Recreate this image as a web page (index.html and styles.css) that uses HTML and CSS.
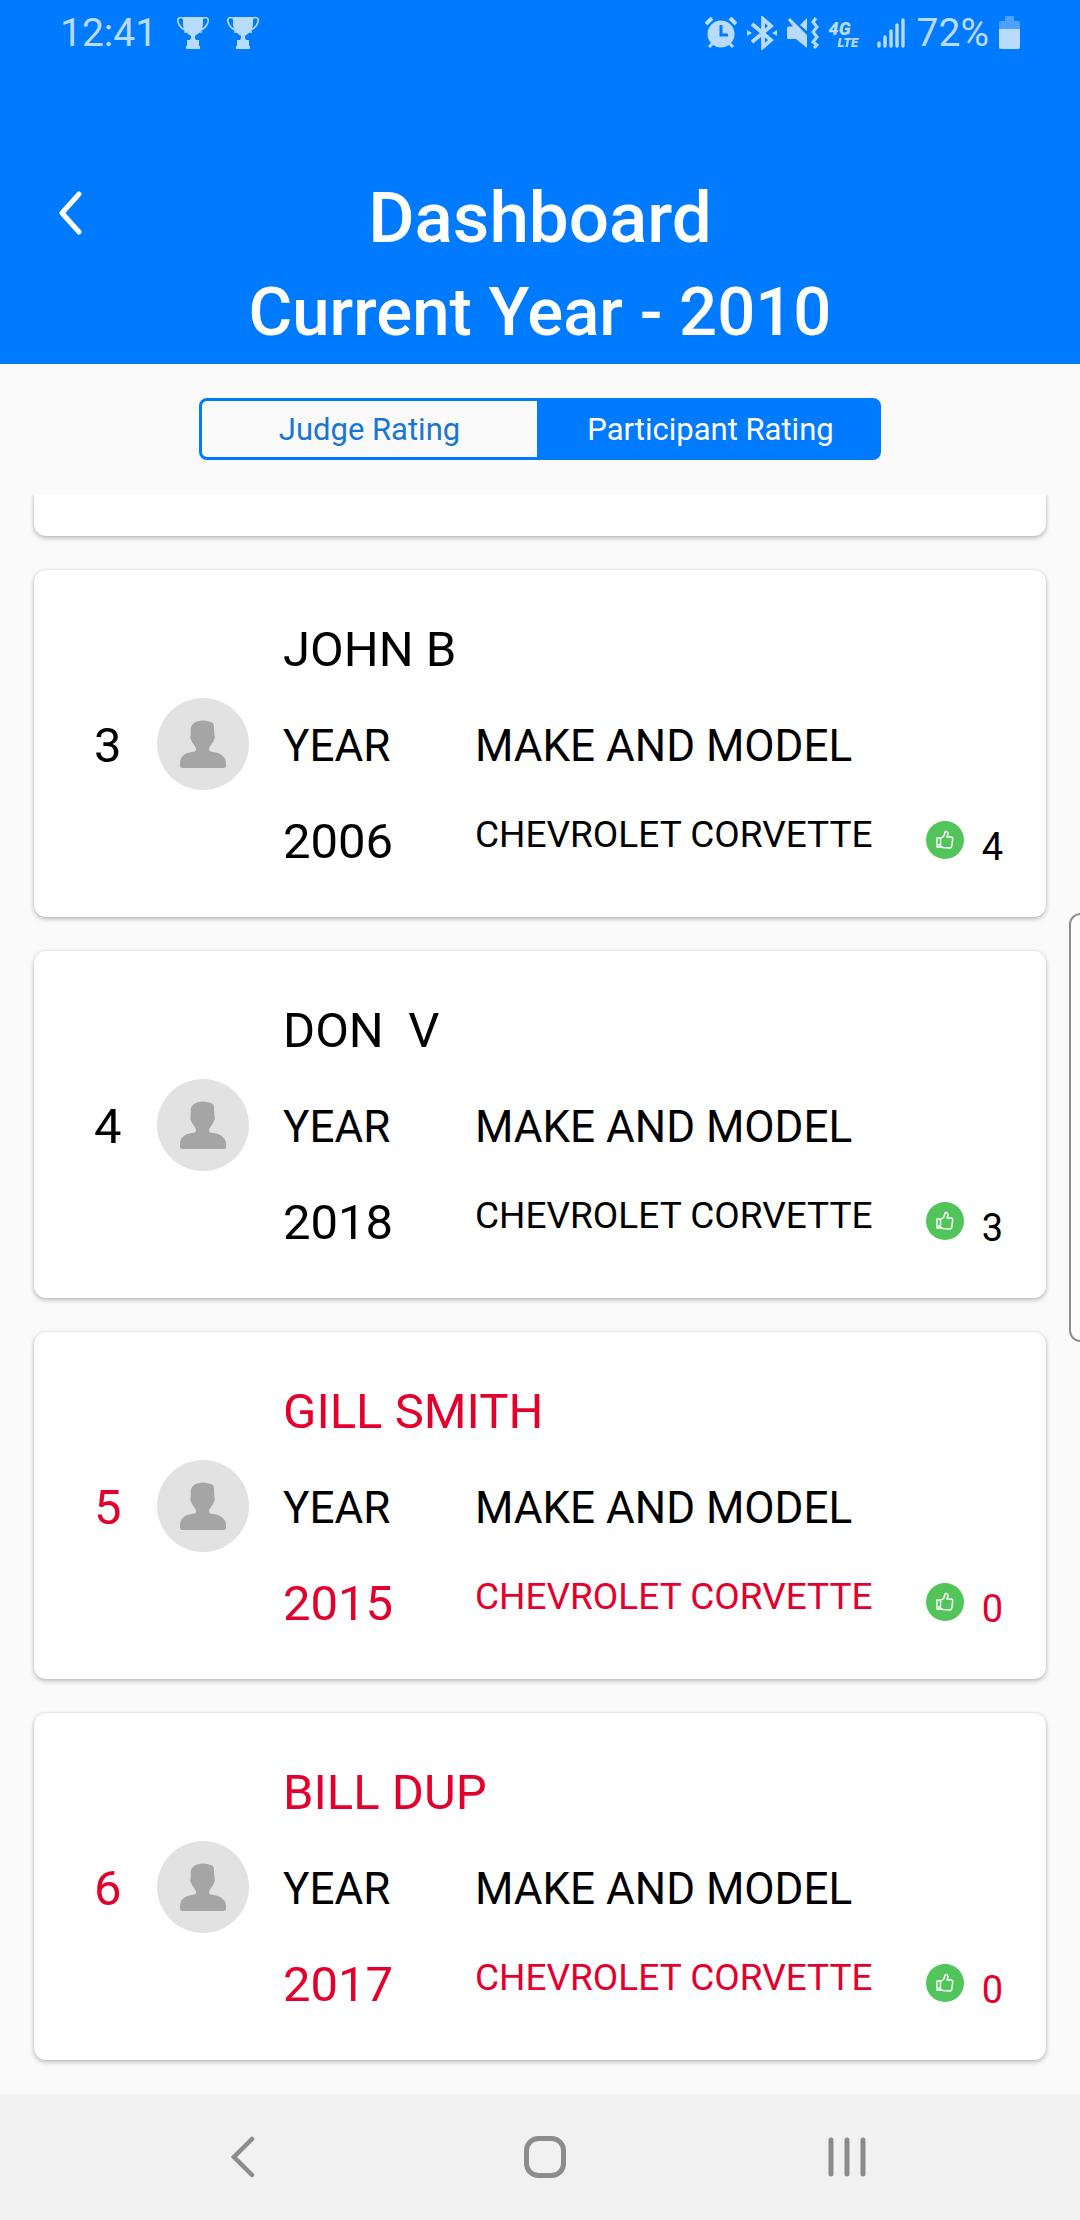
FILE: index.html
```html
<!DOCTYPE html>
<html lang="en">
<head>
<meta charset="utf-8">
<meta name="viewport" content="width=device-width, initial-scale=1">
<title>Dashboard</title>
<link rel="stylesheet" href="styles.css">
</head>
<body>
<svg class="defs" aria-hidden="true">
  <symbol id="trophy" viewBox="0 0 32 34">
    <path d="M6 1h20v6c0 6-3 10-8 13v2l1 2h3v6h1v3H9v-3h1v-6h3l1-2v-2C9 17 6 13 6 7z" fill="currentColor"/>
    <path d="M7 3C3 0 0 2 1 6c1 4 4 7 9 9M25 3c4-3 7-1 6 3-1 4-4 7-9 9M7 16h3M22 16h3" fill="none" stroke="currentColor" stroke-width="1.6"/>
  </symbol>
  <symbol id="person" viewBox="0 0 46 48">
    <path d="M23 .5c4 0 6 1 9 2 2 1 2 3 2 6l.5 7c.8 1 .4 3-.4 4-1 4-5 7-5 9.500 0 2.500 1 2.500 4 3C41 33 46 37 46 43v2.500Q46 48 43.500 48h-41Q0 48 0 45.500V43c0-6 4-10 12-11 3-.5 4-.5 4-3 0-2.500-4-5.500-5-9.500-.9-1-1-3-.3-4V9C11 4 16 .5 23 .5z" fill="currentColor"/>
  </symbol>
  <symbol id="thumb" viewBox="0 0 20 20">
    <path d="M5.500 8.500 8.500 6.500c1.200-1.500.9-4.500 2-5 1.500-.4 2.800 1 2.300 3l-.8 2.500h4q1.900.3 1.700 2L16.800 16q-.4 2-2 2L8 17.500l-2.500-1" fill="none" stroke="currentColor" stroke-width="1.500" stroke-linejoin="round"/>
    <path d="M2 8h3.500v9H2z" fill="none" stroke="currentColor" stroke-width="1.400"/>
    <circle cx="4" cy="15" r=".9" fill="currentColor"/>
  </symbol>
</svg>
<div class="screen">
  <header class="header">
    <div class="status">
      <div class="status-left">
        <span>12:41</span>
        <svg class="trophy"><use href="#trophy"/></svg>
        <svg class="trophy"><use href="#trophy"/></svg>
      </div>
      <div class="status-right">
        <svg width="32" height="32" viewBox="0 0 32 32" role="img" aria-label="Alarm">
          <path d="M1 7 7 1M31 7 25 1" stroke="currentColor" stroke-width="4"/>
          <path d="m4 30 5-5M28 30l-5-5" stroke="currentColor" stroke-width="3"/>
          <circle cx="16" cy="17" r="13.500" fill="currentColor"/>
          <path d="M16 8v10h7" fill="none" stroke="#007aff" stroke-width="3"/>
        </svg>
        <svg width="30" height="34" viewBox="0 0 30 34" role="img" aria-label="Bluetooth">
          <path d="m5 8 19 16-8 7V3l8 7L5 26" fill="none" stroke="currentColor" stroke-width="3.800"/>
          <path d="m0 14 5 3-5 3zM30 14l-5 3 5 3z" fill="currentColor"/>
        </svg>
        <svg width="32" height="32" viewBox="0 0 32 32" role="img" aria-label="Vibrate">
          <path d="M0 11q0-1.500 1.500-1.500H6L1 3l2-2 17 17v13L9 22H1.500Q0 22 0 20.500zM13 8l7-7v13z" fill="currentColor"/>
          <path d="m29 1-3 4 4 5-4 5 4 5-4 5 4 3-3 3" fill="none" stroke="currentColor" stroke-width="3"/>
        </svg>
        <span class="network"><span class="network-gen">4G</span><span class="network-type">LTE</span></span>
        <svg width="28" height="30" viewBox="0 0 28 30" role="img" aria-label="Signal">
          <path d="M2 25v3M8 19v9M14 13v15M20 7v21M26 2v26" stroke="currentColor" stroke-width="3.400" stroke-linecap="round"/>
        </svg>
        <span class="percent">72%</span>
        <svg width="21" height="34" viewBox="0 0 21 34" role="img" aria-label="Battery">
          <path d="M6 1q0-1 1-1h7q1 0 1 1v4h4q2 0 2 2v6H0V7q0-2 2-2h4z" fill="#4da2ff"/>
          <path d="M0 13h21v18q0 2-2 2H2q-2 0-2-2z" fill="currentColor"/>
        </svg>
      </div>
    </div>
    <div class="titlebar">
      <button class="back" type="button" aria-label="Back">
        <svg width="25" height="44" viewBox="0 0 25 44"><path d="M21 3 4 22l17 19" fill="none" stroke="currentColor" stroke-width="5" stroke-linecap="round" stroke-linejoin="round"/></svg>
      </button>
      <h1 class="title">Dashboard</h1>
      <p class="subtitle">Current Year - 2010</p>
    </div>
  </header>

  <main class="content">
    <div class="segments">
      <button class="segment" type="button" aria-pressed="false">Judge Rating</button>
      <button class="segment segment-active" type="button" aria-pressed="true">Participant Rating</button>
    </div>
    <ul class="list">
      <li class="card card-cut"></li>
      <li class="card">
        <span class="rank">3</span>
        <span class="avatar"><svg width="46" height="48"><use href="#person"/></svg></span>
        <h2 class="name">JOHN B</h2>
        <span class="label label-year">YEAR</span>
        <span class="label">MAKE AND MODEL</span>
        <span class="year">2006</span>
        <span class="model">CHEVROLET CORVETTE</span>
        <span class="votes"><span class="like"><svg width="20" height="20"><use href="#thumb"/></svg></span><span class="count">4</span></span>
      </li>
      <li class="card">
        <span class="rank">4</span>
        <span class="avatar"><svg width="46" height="48"><use href="#person"/></svg></span>
        <h2 class="name">DON  V</h2>
        <span class="label label-year">YEAR</span>
        <span class="label">MAKE AND MODEL</span>
        <span class="year">2018</span>
        <span class="model">CHEVROLET CORVETTE</span>
        <span class="votes"><span class="like"><svg width="20" height="20"><use href="#thumb"/></svg></span><span class="count">3</span></span>
      </li>
      <li class="card card-red">
        <span class="rank">5</span>
        <span class="avatar"><svg width="46" height="48"><use href="#person"/></svg></span>
        <h2 class="name">GILL SMITH</h2>
        <span class="label label-year">YEAR</span>
        <span class="label">MAKE AND MODEL</span>
        <span class="year">2015</span>
        <span class="model">CHEVROLET CORVETTE</span>
        <span class="votes"><span class="like"><svg width="20" height="20"><use href="#thumb"/></svg></span><span class="count">0</span></span>
      </li>
      <li class="card card-red">
        <span class="rank">6</span>
        <span class="avatar"><svg width="46" height="48"><use href="#person"/></svg></span>
        <h2 class="name">BILL DUP</h2>
        <span class="label label-year">YEAR</span>
        <span class="label">MAKE AND MODEL</span>
        <span class="year">2017</span>
        <span class="model">CHEVROLET CORVETTE</span>
        <span class="votes"><span class="like"><svg width="20" height="20"><use href="#thumb"/></svg></span><span class="count">0</span></span>
      </li>
    </ul>
  </main>

  <nav class="navbar" aria-label="System">
    <button type="button" aria-label="Back"><svg width="24" height="42" viewBox="0 0 24 42"><path d="M21 3 3 21l18 18" fill="none" stroke="currentColor" stroke-width="4.500" stroke-linecap="round"/></svg></button>
    <button type="button" aria-label="Home"><svg width="42" height="42" viewBox="0 0 42 42"><rect x="2.500" y="2.500" width="37" height="37" rx="12" fill="none" stroke="currentColor" stroke-width="5"/></svg></button>
    <button type="button" aria-label="Recent apps"><svg width="38" height="40" viewBox="0 0 38 40"><path d="M3 3v34M19 3v34M35 3v34" stroke="currentColor" stroke-width="5" stroke-linecap="round"/></svg></button>
  </nav>
  <div class="edge-panel"></div>
</div>
</body>
</html>
```
FILE: styles.css
```css
* {
  box-sizing: border-box;
}

body {
  margin: 0;
  background: #fafafa;
  color: #000;
  font-family: Roboto, "Liberation Sans", sans-serif;
}

button {
  margin: 0;
  padding: 0;
  border: 0;
  background: none;
  color: inherit;
  font: inherit;
}

svg {
  display: block;
  flex: none;
}

.defs {
  position: absolute;
  width: 0;
  height: 0;
}

.screen {
  position: relative;
  display: flex;
  flex-direction: column;
  min-height: 100vh;
}

/* Header */

.header {
  padding-bottom: 4px;
  background: #007aff;
  color: #fff;
}

.status {
  display: flex;
  justify-content: space-between;
  align-items: center;
  height: 66px;
  padding: 0 60px;
  color: #b8dbff;
  font-size: 39px;
}

.status-left {
  display: flex;
  align-items: center;
  gap: 18px;
}

.status-left span {
  margin-right: 2px;
}

.trophy {
  width: 32px;
  height: 34px;
}

.status-right {
  display: flex;
  align-items: center;
  gap: 10px;
}

.network {
  display: flex;
  flex-direction: column;
  width: 32px;
  margin-right: 6px;
  padding-top: 4px;
  font-style: italic;
  font-weight: 900;
}

.network-gen {
  font-size: 18px;
  line-height: 15px;
}

.network-type {
  padding-left: 9px;
  font-size: 13px;
  line-height: 13px;
}

.percent {
  padding-left: 2px;
}

.titlebar {
  display: grid;
  grid-template-columns: 1fr auto 1fr;
  padding: 104px 58px 0;
  text-align: center;
  line-height: 95px;
}

.back {
  display: flex;
  align-items: center;
  justify-self: start;
  height: 86px;
}

.title {
  margin: 0;
  font-size: 71px;
  font-weight: 500;
}

.subtitle {
  grid-column: 1 / -1;
  margin: 0;
  font-size: 67px;
  font-weight: 500;
}

/* Rating switch */

.content {
  flex: 1;
}

.segments {
  display: grid;
  grid-template-columns: 1fr 1fr;
  width: 90%;
  max-width: 682px;
  height: 62px;
  margin: 34px auto;
  font-size: 31px;
}

.segment {
  border: 3px solid #007aff;
  border-radius: 8px 0 0 8px;
  color: #1976d2;
}

.segment-active {
  border-radius: 0 8px 8px 0;
  background: #007aff;
  color: #fff;
}

/* Participant cards */

.list {
  display: flex;
  flex-direction: column;
  gap: 34px;
  margin: 0;
  padding: 0 34px 34px;
  overflow: hidden;
  list-style: none;
}

.card {
  display: grid;
  grid-template-columns: 29px 92px 158px 1fr auto;
  grid-template-rows: repeat(3, 96px);
  column-gap: 34px;
  align-items: center;
  padding: 30px 43px 29px 60px;
  border-radius: 12px;
  background: #fff;
  box-shadow: 0 2px 5px rgba(0, 0, 0, 0.26), 0 0 2px rgba(0, 0, 0, 0.12);
}

.card-cut {
  display: block;
  height: 42px;
  padding: 0;
  border-radius: 0 0 12px 12px;
}

.rank,
.name,
.year {
  padding-top: 4px;
  font-size: 49px;
  line-height: 58px;
}

.rank {
  grid-column: 1;
  grid-row: 2;
}

.avatar {
  display: flex;
  grid-column: 2;
  grid-row: 2;
  align-items: center;
  justify-content: center;
  height: 92px;
  border-radius: 50%;
  background: #e2e2e2;
  color: #a5a5a5;
}

.name {
  grid-column: 3 / -1;
  grid-row: 1;
  margin: 0;
  font-weight: 400;
  white-space: pre;
}

.label {
  grid-column: 4 / -1;
  grid-row: 2;
  padding-top: 4px;
  font-size: 44px;
  line-height: 58px;
}

.label-year {
  grid-column: 3;
}

.year {
  grid-column: 3;
  grid-row: 3;
}

.model {
  grid-column: 4;
  grid-row: 3;
  padding-bottom: 10px;
  font-size: 37px;
  line-height: 44px;
}

.votes {
  display: flex;
  grid-column: 5;
  grid-row: 3;
  align-items: center;
  gap: 18px;
}

.like {
  display: flex;
  align-items: center;
  justify-content: center;
  width: 38px;
  height: 38px;
  border-radius: 50%;
  background: #51c45a;
  color: #fff;
}

.count {
  padding-top: 14px;
  font-size: 38px;
  line-height: 44px;
}

.card-red .rank,
.card-red .name,
.card-red .year,
.card-red .model,
.card-red .count {
  color: #e4002d;
}

/* System navigation */

.navbar {
  display: grid;
  grid-template-columns: repeat(3, 1fr);
  height: 126px;
  padding: 0 82px 0 92px;
  background: #f1f1f1;
  color: #8c8c8c;
}

.navbar button {
  display: flex;
  align-items: center;
  justify-content: center;
}

.edge-panel {
  position: absolute;
  top: 913px;
  right: -12px;
  width: 23px;
  height: 429px;
  border: 2px solid #8c8c8c;
  border-radius: 12px;
  background: #fdfdfd;
  clip-path: inset(0 12px 0 0);
}
```
